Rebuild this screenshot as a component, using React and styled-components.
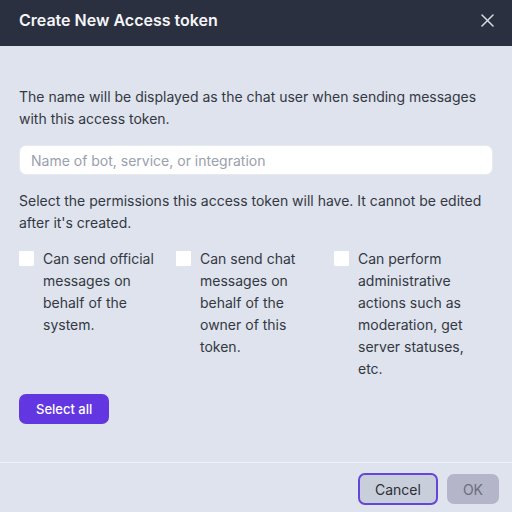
import React from "react";
import styled, { createGlobalStyle } from "styled-components";

const Global = createGlobalStyle`
  html, body { margin: 0; padding: 0; }
  body { font-family: Inter, "Noto Sans", sans-serif; background: #dee3ed; }
`;

const Dialog = styled.div`
  width: 512px;
  min-height: 512px;
  background: #dee3ed;
  display: flex;
  flex-direction: column;
`;

const Header = styled.div`
  height: 46px;
  background: #2b3040;
  display: flex;
  align-items: flex-start;
  justify-content: space-between;
  padding: 10px 18px 0 19px;
  box-sizing: border-box;
`;

const Title = styled.h2`
  margin: 0;
  color: #f4f5f8;
  font-size: 16px;
  line-height: 20px;
  font-weight: 600;
`;

const Close = styled.button`
  border: 0;
  background: none;
  padding: 0;
  margin-top: 3px;
  width: 14px;
  height: 14px;
  display: flex;
  align-items: center;
  justify-content: center;
  color: #d8dbe3;
`;

const Body = styled.div`
  padding: 40px 19px 38px;
  display: flex;
  flex-direction: column;
  border-bottom: 1px solid #eef1f7;
`;

const Text = styled.p`
  margin: 0;
  font-size: 14px;
  line-height: 22px;
  color: #343842;
`;

const Input = styled.input`
  margin: 15px 0 15px;
  height: 30px;
  box-sizing: border-box;
  border: 1px solid #e6e9ef;
  border-radius: 7px;
  background: #fff;
  padding: 0 11px;
  font-family: inherit;
  font-size: 14px;
  color: #2e323d;
  outline: none;
  &::placeholder { color: #9aa0ad; }
`;

const Perms = styled.div`
  margin-top: 14px;
  display: grid;
  grid-template-columns: 157px 158px 1fr;
`;

const Perm = styled.label`
  display: flex;
  align-items: flex-start;
  gap: 9px;
`;

const Box = styled.span`
  flex: none;
  width: 15px;
  height: 15px;
  margin-top: 3px;
  background: #fff;
  border-radius: 1px;
`;

const PermText = styled.span`
  font-size: 14px;
  line-height: 22px;
  color: #343842;
  width: 112px;
`;

const Primary = styled.button`
  align-self: flex-start;
  margin-top: 14px;
  height: 30px;
  padding: 0 17px;
  border: 0;
  border-radius: 7px;
  background: #6236e0;
  color: #fff;
  font-family: inherit;
  font-size: 13px;
  font-weight: 500;
`;

const Footer = styled.div`
  display: flex;
  justify-content: flex-end;
  align-items: center;
  gap: 9px;
  padding: 10px 13px 0 0;
`;

const Button = styled.button`
  height: ${p => (p.$focused ? "32px" : "30px")};
  padding: 0 ${p => (p.$focused ? "15px" : "16px")};
  border-radius: 7px;
  border: ${p => (p.$focused ? "2px solid #6546d8" : "0")};
  background: ${p => (p.$disabled ? "#b4b5c9" : "#c9cfda")};
  color: ${p => (p.$disabled ? "#6b6e7c" : "#2a2e38")};
  font-family: inherit;
  font-size: 14px;
  font-weight: 400;
  box-sizing: border-box;
`;

const perms = [
  "Can send official messages on behalf of the system.",
  "Can send chat messages on behalf of the owner of this token.",
  "Can perform administrative actions such as moderation, get server statuses, etc.",
];

export default function App() {
  return (
    <>
      <Global />
      <Dialog>
        <Header>
          <Title>Create New Access token</Title>
          <Close aria-label="Close">
            <svg width="13" height="13" viewBox="0 0 13 13" fill="none">
              <path d="M1 1L12 12M12 1L1 12" stroke="currentColor" strokeWidth="1.5" strokeLinecap="round" />
            </svg>
          </Close>
        </Header>
        <Body>
          <Text>The name will be displayed as the chat user when sending messages with this access token.</Text>
          <Input placeholder="Name of bot, service, or integration" />
          <Text>Select the permissions this access token will have. It cannot be edited after it's created.</Text>
          <Perms>
            {perms.map(p => (
              <Perm key={p}>
                <Box />
                <PermText>{p}</PermText>
              </Perm>
            ))}
          </Perms>
          <Primary>Select all</Primary>
        </Body>
        <Footer>
          <Button $focused>Cancel</Button>
          <Button $disabled>OK</Button>
        </Footer>
      </Dialog>
    </>
  );
}
